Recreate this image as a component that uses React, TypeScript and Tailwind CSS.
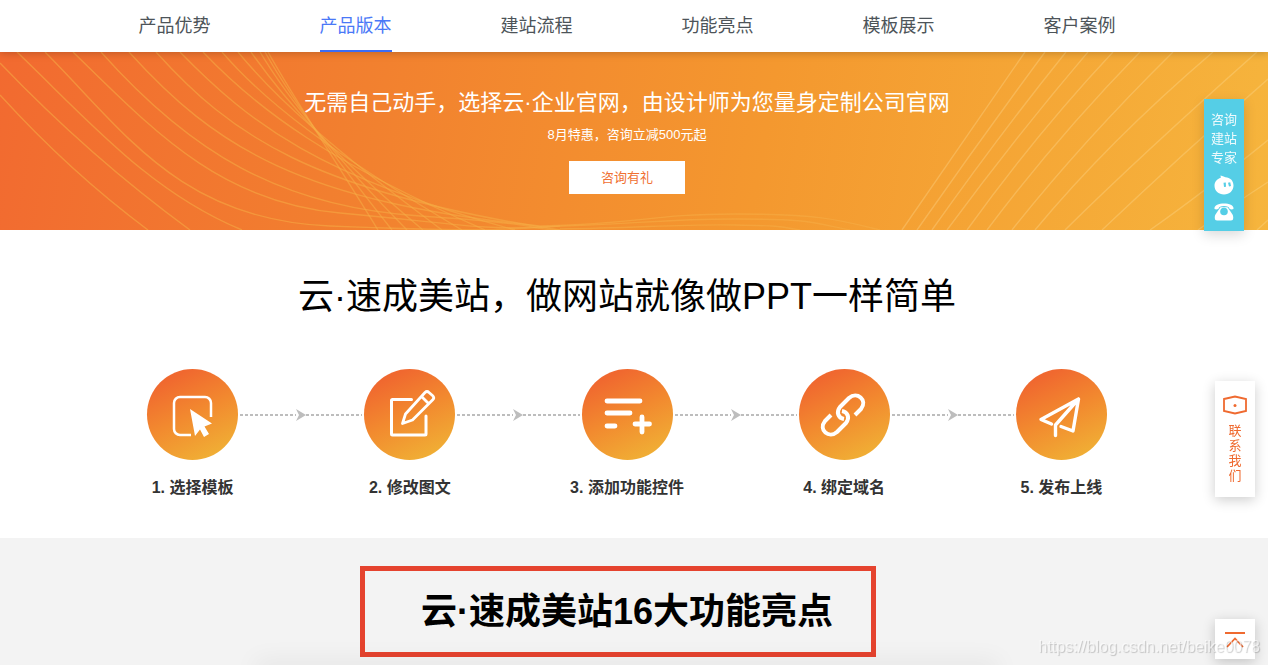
import type { ReactNode } from "react";
import clsx from "clsx";

const navItems = ["产品优势", "产品版本", "建站流程", "功能亮点", "模板展示", "客户案例"];
const activeItem = "产品版本";

const leftLines = [
    "M0 43Q70 120 148 178",
    "M0 11Q90 105 190 178",
    "M17 0C90 70 150 140 242 178",
    "M45 0C125 80 180 168 330 174S500 178 560 174",
    "M73 0C155 80 220 150 340 161S480 178 540 175",
    "M101 0C190 100 280 155 420 164S520 177 560 178",
    "M129 0C215 95 300 150 540 174",
    "M156 0C230 82 310 140 560 178",
    "M180 0C250 72 320 125 515 178",
    "M203 0C260 60 330 110 485 178",
    "M222 0C265 50 330 100 462 178",
    "M238 0C275 45 330 95 442 178",
    "M251 0C285 48 330 100 423 178",
    "M260 0C290 50 335 105 407 178",
    "M265 0C290 45 330 100 392 178",
    "M268 0C290 40 330 100 378 178",
    "M540 174C640 172 650 162 735 162S840 168 880 178",
    "M540 175C640 172 660 167 735 167S810 170 850 178",
    "M560 177C640 176 680 172 735 173S780 175 800 178",
];

const rightLines = [
    "M1025 0L902 178",
    "M1045 0Q980 88 917 178",
    "M1066 0Q1000 82 932 178",
    "M1088 0Q1018 82 947 178",
    "M1113 0Q1036 82 967 178",
    "M1140 0Q1056 86 987 178",
    "M1173 0Q1080 92 1012 178",
    "M1213 0Q1108 90 1035 178",
    "M1257 0Q1140 104 1065 178",
    "M1268 27Q1180 104 1102 178",
    "M1268 88Q1204 140 1150 178",
    "M1268 130Q1228 156 1198 178",
    "M1268 168L1257 178",
];

const steps: { label: string; icon: ReactNode }[] = [
    {
        label: "1. 选择模板",
        icon: (
            <>
                <path d="M64 48V34a6 6 0 0 0-6-6H33a6 6 0 0 0-6 6v26a6 6 0 0 0 6 6h11" strokeWidth="2.5" strokeLinecap="butt" />
                <path d="M43 40L65 54.500L57.500 57.500L62 65L57 68L53 60.500L48 67Z" fill="#fff" stroke="none" />
            </>
        ),
    },
    {
        label: "2. 修改图文",
        icon: (
            <>
                <path d="M47.500 30.500H28.500a1 1 0 0 0-1 1v33.500a1 1 0 0 0 1 1H61a1 1 0 0 0 1-1V47" strokeWidth="3" />
                <path d="M38.500 54.500L41.500 45L61 23.500Q63 21.500 65 23.500L69 27Q70.500 29 69 30.500L48.500 51ZM57.500 27.500L64.500 34.500" strokeWidth="2.800" />
            </>
        ),
    },
    {
        label: "3. 添加功能控件",
        icon: <path d="M25 32H58M25 44H48M25 57H33M53 55H67.500M60 48V63" strokeWidth="4.800" />,
    },
    {
        label: "4. 绑定域名",
        icon: (
            <path
                d="M45 50C39 49 37 43 41 38L50 29C58 22 69 31 62 40L56 46M43 42C49 43 51 49 47 54L38 63C30 70 19 61 26 52L32 46"
                strokeWidth="4"
                strokeLinecap="butt"
            />
        ),
    },
    {
        label: "5. 发布上线",
        icon: <path d="M35.500 55L25 50.500L62.500 30L57 62L45 57.500M62.500 30L39.500 56V66.500" strokeWidth="3.400" />,
    },
];

function Header() {
    return (
        <header className="relative z-10 bg-white shadow-[0_1px_8px_rgba(0,0,0,0.22)] pr-[14px]">
            <nav className="grid grid-cols-6 mx-auto max-w-[1086px]">
                {navItems.map((item) => (
                    <a
                        key={item}
                        href="#"
                        className={clsx(
                            "justify-self-center pt-[13px] pb-[11px] border-b-2 text-lg leading-[26px]",
                            item === activeItem ? "border-[#3b6cf6] text-[#4a78f7]" : "border-transparent text-[#4d5459]",
                        )}
                    >
                        {item}
                    </a>
                ))}
            </nav>
        </header>
    );
}

function Banner() {
    return (
        <section className="relative bg-[linear-gradient(100deg,#f26a30_0%,#f2812f_30%,#f4982f_60%,#f6b53d_100%)] pt-[35px] pr-[14px] pb-9 overflow-hidden text-white text-center">
            <svg
                className="absolute inset-0 w-full h-full"
                viewBox="0 0 1268 178"
                preserveAspectRatio="xMidYMid slice"
                fill="none"
                strokeWidth="1.400"
                aria-hidden="true"
            >
                <g stroke="#f5ad45" strokeOpacity="0.55">
                    {leftLines.map((d) => (
                        <path key={d} d={d} />
                    ))}
                </g>
                <g stroke="#ffe0a0" strokeOpacity="0.3">
                    {rightLines.map((d) => (
                        <path key={d} d={d} />
                    ))}
                </g>
            </svg>
            <div className="relative">
                <h2 className="text-[22px] leading-8">无需自己动手，选择云·企业官网，由设计师为您量身定制公司官网</h2>
                <p className="mt-1.5 text-[13px] leading-5">8月特惠，咨询立减500元起</p>
                <button type="button" className="bg-white mt-4 px-8 h-[33px] text-[#f07032] text-[13px]">
                    咨询有礼
                </button>
            </div>
        </section>
    );
}

function Connector({ arrow, hidden }: { arrow?: boolean; hidden?: boolean }) {
    return (
        <span className={clsx("flex flex-1 items-center", hidden && "invisible")}>
            <span className="flex-1 bg-[repeating-linear-gradient(90deg,#bdbdbd_0_3px,transparent_3px_5px)] h-0.5" />
            {arrow && (
                <svg className="-mr-[5px]" width="10" height="12" viewBox="0 0 10 12" fill="#bdbdbd" aria-hidden="true">
                    <path d="M0 0L10 6L0 12L3 6Z" />
                </svg>
            )}
        </span>
    );
}

function Steps() {
    return (
        <section className="bg-white pt-[43px] pr-[14px] pb-[38px]">
            <h2 className="text-4xl text-black text-center leading-[48px]">云·速成美站，做网站就像做PPT一样简单</h2>
            <ol className="flex mx-auto mt-12 max-w-[1086px]">
                {steps.map((step, i) => (
                    <li key={step.label} className="flex-1">
                        <div className="flex items-center">
                            <Connector hidden={i === 0} />
                            <svg
                                className="bg-[linear-gradient(155deg,#f0682f_15%,#f28a2f_50%,#f0b035_90%)] mx-0.5 rounded-full w-[91px] h-[91px]"
                                viewBox="0 0 91 91"
                                fill="none"
                                stroke="#fff"
                                strokeLinecap="round"
                                strokeLinejoin="round"
                                aria-hidden="true"
                            >
                                {step.icon}
                            </svg>
                            <Connector arrow hidden={i === steps.length - 1} />
                        </div>
                        <p className="mt-4 font-bold text-[#333] text-base text-center leading-6">{step.label}</p>
                    </li>
                ))}
            </ol>
        </section>
    );
}

function Features() {
    return (
        <section className="flex flex-col flex-1 bg-[#f3f3f3] pt-[50px] pr-[14px] overflow-hidden text-center">
            <div>
                <h2 className="inline-block relative font-bold text-4xl text-black leading-[48px]">
                    云·速成美站16大功能亮点
                    <span className="-top-[22px] -right-[43px] -bottom-[21px] -left-[61px] absolute border-[#e5432e] border-[5px]" />
                </h2>
            </div>
            <div className="bg-[#eee] shadow-[0_0_24px_6px_rgba(0,0,0,0.08)] mx-auto mt-auto w-7/12 h-px translate-y-1" />
        </section>
    );
}

function FloatingTools() {
    return (
        <>
            <aside className="top-[99px] right-6 z-20 fixed flex flex-col items-center bg-[#55cee6] shadow-[0_4px_12px_rgba(0,0,0,0.15)] pt-[11px] pb-2.5 w-10 text-[13px] text-white/90 leading-[19px]">
                <span>咨询</span>
                <span>建站</span>
                <span>专家</span>
                <svg className="mt-2" width="20" height="20" viewBox="0 0 20 20" aria-hidden="true">
                    <path d="M6.500 0.500Q9 1 11.500 2.200C16 2.400 19.500 5.500 19.500 10.500C19.500 15.500 15.500 19.500 10 19.500C4.500 19.500 0.500 15.800 0.500 10.800C0.500 7 3 3.800 6.800 2.800Z" fill="#fff" />
                    <path d="M9.500 7.800L11.800 7.600L12 11.800L10 12ZM14 7.800L16.200 7.300L17 11L15 11.600Z" fill="#55cee6" />
                </svg>
                <svg className="mt-2" width="20" height="18" viewBox="0 0 20 18" aria-hidden="true">
                    <path d="M0.500 6C0 2 5 0.500 10 0.500S20 2 19.500 6Q17.500 7 15.500 5.800Q15 3 10 3T4.500 5.800Q2.500 7 0.500 6Z" fill="#fff" />
                    <path d="M6.500 4.200H13.500Q16 7.500 18.800 12Q20.300 17.500 17 17.500H3Q-0.300 17.500 1.200 12Q4 7.500 6.500 4.200Z" fill="#fff" />
                    <circle cx="10" cy="8.500" r="3.800" fill="#55cee6" />
                </svg>
            </aside>
            <a
                href="#"
                className="top-[381px] right-[13px] z-20 fixed flex flex-col items-center bg-white shadow-[0_3px_12px_rgba(0,0,0,0.2)] pt-[14px] pb-3.5 w-10 text-[#ef6a30] text-[13px] leading-[15px]"
            >
                <svg className="mb-2" width="24" height="20" viewBox="0 0 24 20" fill="none" aria-hidden="true">
                    <path d="M1 4L12 1.500L23 4V16L12 18.500L1 16Z" stroke="#ef6a30" strokeWidth="1.800" />
                    <circle cx="12" cy="10.500" r="1.500" fill="#ef6a30" />
                </svg>
                {["联", "系", "我", "们"].map((char) => (
                    <span key={char}>{char}</span>
                ))}
            </a>
            <button
                type="button"
                aria-label="返回顶部"
                className="right-[13px] bottom-1.5 z-20 fixed flex justify-center items-center bg-white shadow-[0_3px_12px_rgba(0,0,0,0.2)] w-10 h-10"
            >
                <svg width="22" height="18" viewBox="0 0 22 18" fill="none" stroke="#ef6a30" aria-hidden="true">
                    <path d="M1 3H21" strokeWidth="2" />
                    <path d="M3 17L11 8.500L19 17" strokeWidth="1.800" />
                </svg>
            </button>
            <span className="right-2 bottom-2 z-30 fixed text-[#fff9] text-base leading-5 [text-shadow:1px_1px_1px_#0003]">
                https://blog.csdn.net/beike0078
            </span>
        </>
    );
}

export default function App() {
    return (
        <div lang="zh-CN" className="flex flex-col min-h-screen font-['Liberation_Sans','Noto_Sans_CJK_SC',sans-serif]">
            <Header />
            <Banner />
            <Steps />
            <Features />
            <FloatingTools />
        </div>
    );
}
